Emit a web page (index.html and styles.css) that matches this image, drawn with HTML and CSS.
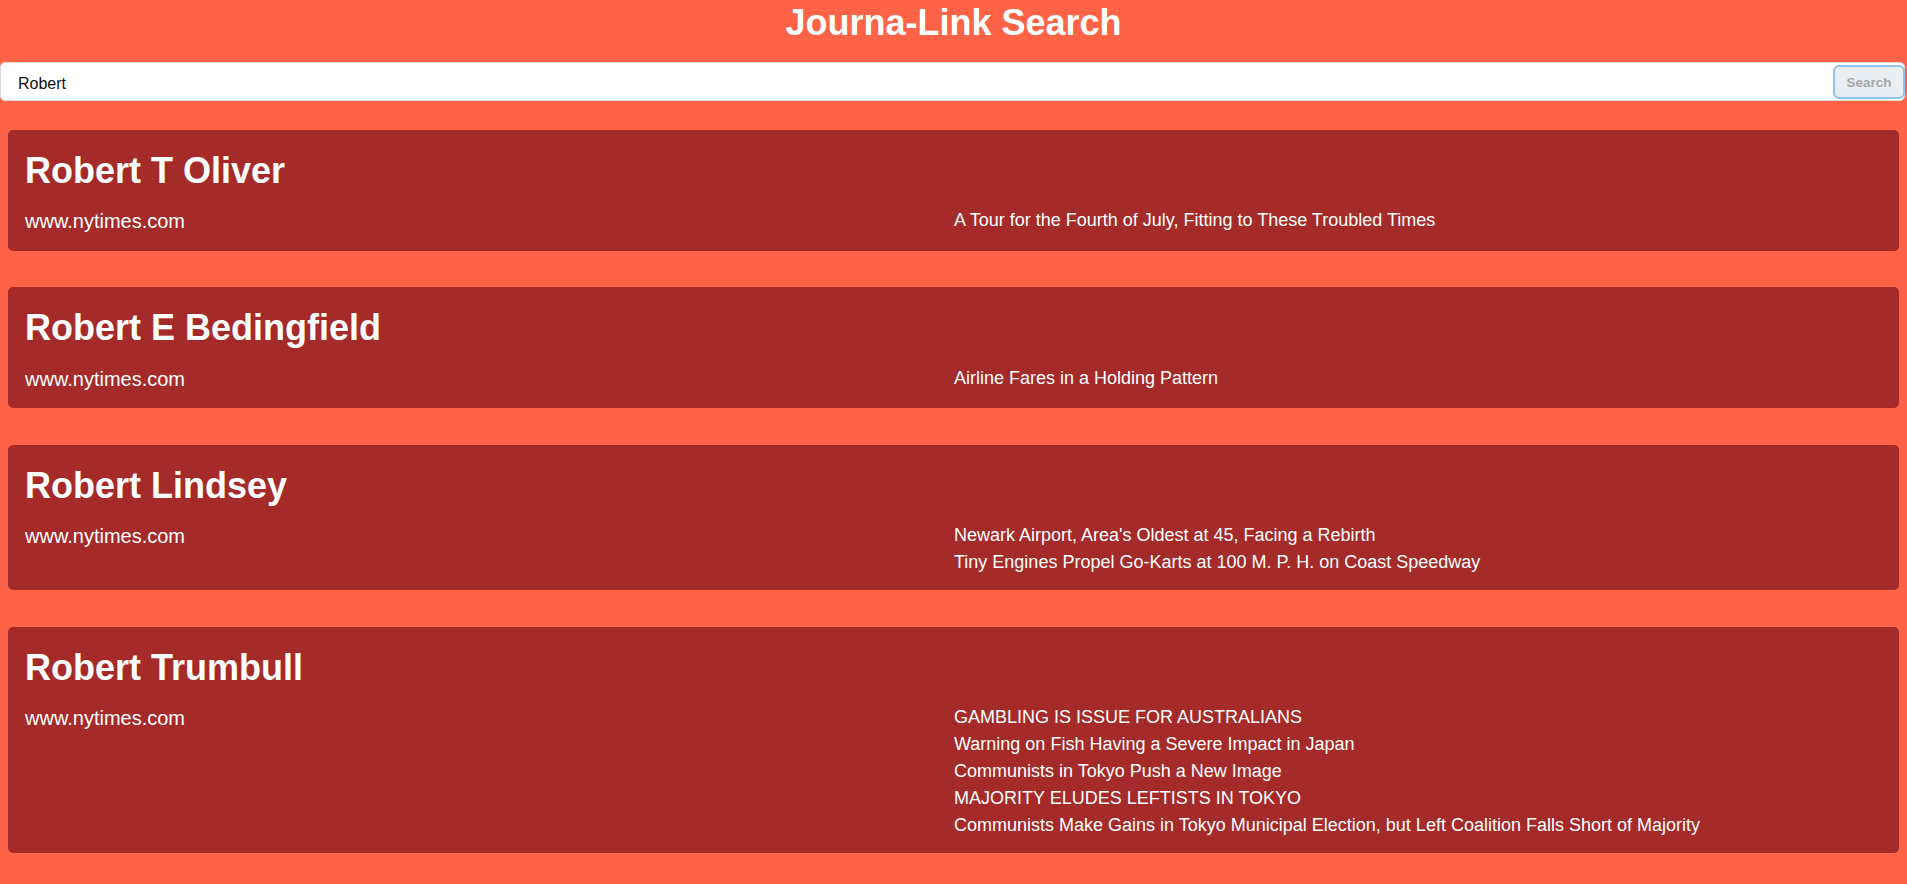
FILE: index.html
```html
<!DOCTYPE html>
<html lang="en">
<head>
<meta charset="utf-8">
<title>Journa-Link Search</title>
<link rel="stylesheet" href="styles.css">
</head>
<body>
  <header class="header">
    <h1 class="title">Journa-Link Search</h1>
  </header>
  <form class="search">
    <input class="search-input" type="text" value="Robert">
    <button class="search-btn" type="button">Search</button>
  </form>
  <main class="results">
    <section class="card">
      <h2 class="name">Robert T Oliver</h2>
      <div class="row">
        <div class="site">www.nytimes.com</div>
        <div class="articles">
          <div class="article">A Tour for the Fourth of July, Fitting to These Troubled Times</div>
        </div>
      </div>
    </section>
    <section class="card">
      <h2 class="name">Robert E Bedingfield</h2>
      <div class="row">
        <div class="site">www.nytimes.com</div>
        <div class="articles">
          <div class="article">Airline Fares in a Holding Pattern</div>
        </div>
      </div>
    </section>
    <section class="card">
      <h2 class="name">Robert Lindsey</h2>
      <div class="row">
        <div class="site">www.nytimes.com</div>
        <div class="articles">
          <div class="article">Newark Airport, Area's Oldest at 45, Facing a Rebirth</div>
          <div class="article">Tiny Engines Propel Go-Karts at 100 M. P. H. on Coast Speedway</div>
        </div>
      </div>
    </section>
    <section class="card">
      <h2 class="name">Robert Trumbull</h2>
      <div class="row">
        <div class="site">www.nytimes.com</div>
        <div class="articles">
          <div class="article">GAMBLING IS ISSUE FOR AUSTRALIANS</div>
          <div class="article">Warning on Fish Having a Severe Impact in Japan</div>
          <div class="article">Communists in Tokyo Push a New Image</div>
          <div class="article">MAJORITY ELUDES LEFTISTS IN TOKYO</div>
          <div class="article">Communists Make Gains in Tokyo Municipal Election, but Left Coalition Falls Short of Majority</div>
        </div>
      </div>
    </section>
  </main>
</body>
</html>
```
FILE: styles.css
```css
html, body {
  margin: 0;
  padding: 0;
}

body {
  background: #ff6347;
  font-family: "Liberation Sans", Arial, sans-serif;
  color: #ffffff;
}

.header {
  padding-top: 2px;
}

.title {
  margin: 0;
  text-align: center;
  font-size: 36px;
  line-height: 41px;
  font-weight: bold;
  color: #ffffff;
}

.search {
  position: relative;
  margin: 19px 2px 0 0;
}

.search-input {
  display: block;
  box-sizing: border-box;
  width: 100%;
  height: 39px;
  margin: 0;
  padding: 4px 0 0 17px;
  border: 1px solid #dcdcdc;
  border-radius: 5px;
  background: #ffffff;
  font-family: "Liberation Sans", Arial, sans-serif;
  font-size: 16px;
  color: #111111;
  outline: none;
}

.search-btn {
  position: absolute;
  right: 0;
  top: 3px;
  box-sizing: border-box;
  width: 72px;
  height: 34px;
  padding: 0;
  border: 2.5px solid #8ec3ef;
  border-radius: 6px;
  background: #e9eef3;
  color: #a6a6a6;
  font-family: "Liberation Sans", Arial, sans-serif;
  font-size: 13.5px;
  font-weight: bold;
}

.results {
  display: flex;
  flex-direction: column;
  gap: 36.5px;
  margin: 28.5px 8px 0;
}

.card {
  background: #a52a2a;
  border-radius: 5px;
  padding: 20px 16px 17.5px 17px;
}

.name {
  margin: 0 0 19.5px;
  font-size: 36px;
  line-height: 41px;
  font-weight: bold;
}

.row {
  display: grid;
  grid-template-columns: 1fr 1fr;
}

.site {
  font-size: 20px;
  line-height: 23px;
}

.articles {
  display: flex;
  flex-direction: column;
  gap: 6.5px;
}

.article {
  font-size: 18px;
  line-height: 20.5px;
}
```
